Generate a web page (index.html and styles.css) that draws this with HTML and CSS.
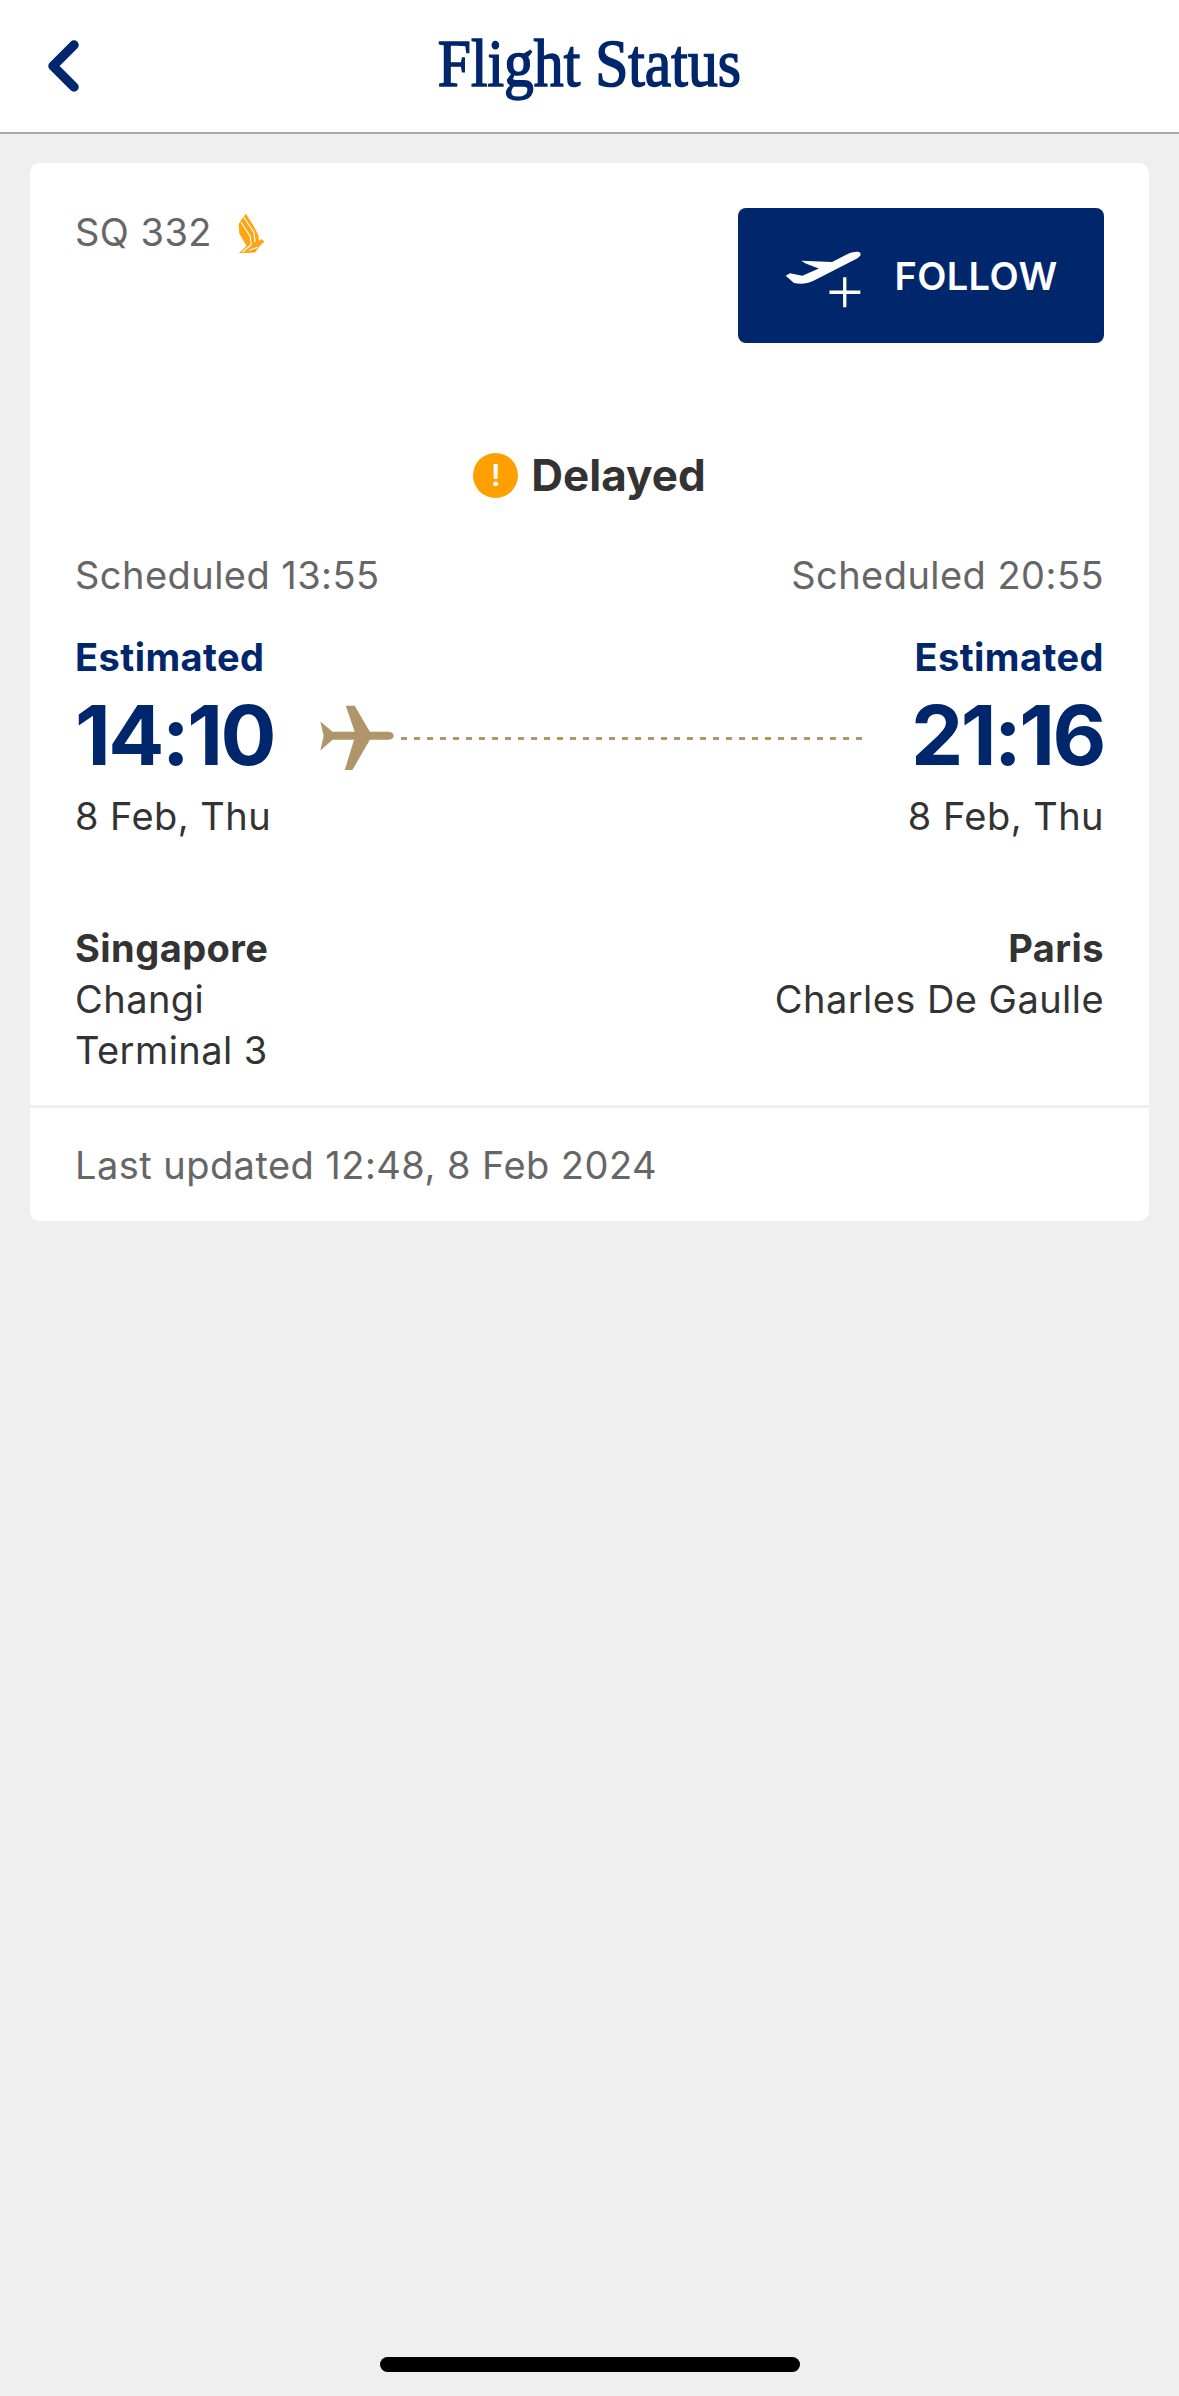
FILE: index.html
```html
<!DOCTYPE html>
<html lang="en">
<head>
<meta charset="utf-8">
<title>Flight Status</title>
<link rel="stylesheet" href="styles.css">
</head>
<body>
<div class="screen">
  <header class="topbar">
    <svg class="back" viewBox="0 0 34 54"><path d="M28 6 L7 27 L28 48"/></svg>
    <h1 class="title"><span>Flight Status</span></h1>
  </header>
  <main class="content">
    <section class="card">
      <div class="card-main">
        <div class="flight-row">
          <div class="flight-no">
            <span>SQ 332</span>
            <svg class="bird" viewBox="26 18 82 124">
              <path fill="#ffa412" d="M50 20 L72 55 L88 85 L90 103 L97 97 L106 104 L92 118 L78 138 L28 140 L52 118 L30 80 L28 52 L36 38 Z"/>
              <path fill="none" stroke="#fff" stroke-width="3.5" d="M43 30 L74 76 L78 106 M35 46 L63 88 L66 114 L40 136 M86 122 L60 131"/>
            </svg>
          </div>
          <button class="follow">
            <svg class="follow-icon" viewBox="185 170 235 180">
              <path fill="#fff" d="M415 182 C410 175 395 178 380 183 L330 209 L237 205 L250 213 L290 228 L240 250 L203 243 L190 250 L215 272 C240 278 260 272 280 262 L405 198 C412 194 418 188 415 182 Z"/>
              <path fill="none" stroke="#fff" stroke-width="10" d="M368 255 V345 M322 300 H415"/>
            </svg>
            <span>FOLLOW</span>
          </button>
        </div>
        <div class="status">
          <span class="status-icon">!</span>
          <span>Delayed</span>
        </div>
        <div class="scheduled">
          <span>Scheduled 13:55</span>
          <span>Scheduled 20:55</span>
        </div>
        <div class="times">
          <div class="time-col">
            <div class="est">Estimated</div>
            <div class="clock">14:10</div>
            <div class="date">8 Feb, Thu</div>
          </div>
          <div class="route">
            <svg class="plane" viewBox="805 260 228 200">
              <path fill="#b0956a" d="M1030 353 C1030 345 1022 341 1012 341 L958 341 L912 262 L885 262 L912 341 L845 341 L808 310 L818 353 L808 398 L845 365 L910 365 L882 457 L905 457 L958 365 L1012 365 C1022 365 1030 361 1030 353 Z"/>
            </svg>
            <div class="dash"></div>
          </div>
          <div class="time-col end">
            <div class="est">Estimated</div>
            <div class="clock">21:16</div>
            <div class="date">8 Feb, Thu</div>
          </div>
        </div>
        <div class="places">
          <div class="place">
            <strong>Singapore</strong>
            <span>Changi</span>
            <span>Terminal 3</span>
          </div>
          <div class="place end">
            <strong>Paris</strong>
            <span>Charles De Gaulle</span>
          </div>
        </div>
      </div>
      <footer class="updated">Last updated 12:48, 8 Feb 2024</footer>
    </section>
  </main>
  <div class="home-bar"></div>
</div>
</body>
</html>
```

FILE: styles.css
```css
* { box-sizing: border-box; }
html, body { margin: 0; padding: 0; }
body {
  background: #efefef;
  font-family: "Inter", "Open Sans", sans-serif;
  letter-spacing: 0.45px;
  color: #333;
}
.screen {
  width: 1179px;
  height: 2396px;
  display: flex;
  flex-direction: column;
  background: #efefef;
}
.topbar {
  height: 134px;
  flex: none;
  background: #fff;
  border-bottom: 2px solid #aaa;
  display: flex;
  align-items: center;
  justify-content: center;
  position: relative;
}
.back {
  position: absolute;
  left: 46px;
  top: 39px;
  width: 34px;
  height: 54px;
}
.back path {
  fill: none;
  stroke: #00266b;
  stroke-width: 9.5;
  stroke-linecap: round;
  stroke-linejoin: round;
}
.title {
  margin: 0 0 7px;
  font-family: "Liberation Serif", serif;
  font-weight: 400;
  font-size: 67px;
  line-height: 80px;
  letter-spacing: 0;
  color: #00266b;
  -webkit-text-stroke: 1.6px #00266b;
}
.title span {
  display: inline-block;
  transform: scaleX(0.89);
}
.content {
  flex: 1;
  padding: 29px 30px 0;
}
.card {
  background: #fff;
  border-radius: 10px;
}
.card-main {
  padding: 45px 45px 29px;
}
.flight-row {
  display: flex;
  justify-content: space-between;
  align-items: flex-start;
}
.flight-no {
  display: flex;
  align-items: center;
  gap: 26px;
  font-size: 38px;
  line-height: 48px;
  color: #666;
}
.bird {
  width: 27px;
  height: 41px;
  flex: none;
  margin-top: 2px;
}
.follow {
  width: 366px;
  height: 135px;
  border: 0;
  border-radius: 8px;
  background: #00266b;
  color: #fff;
  font-family: inherit;
  font-size: 38px;
  font-weight: 600;
  letter-spacing: 0.4px;
  display: flex;
  align-items: center;
  justify-content: center;
  gap: 32px;
  padding: 0;
}
.follow-icon {
  width: 78px;
  height: 60px;
  margin-top: 6px;
}
.status {
  margin-top: 104px;
  display: flex;
  justify-content: center;
  align-items: center;
  gap: 13px;
  font-size: 44px;
  font-weight: 700;
  letter-spacing: 0;
  line-height: 56px;
}
.status-icon {
  width: 45px;
  height: 45px;
  border-radius: 50%;
  background: #ff9f00;
  color: #fff;
  font-size: 30px;
  font-weight: 600;
  line-height: 45px;
  text-align: center;
}
.scheduled {
  margin-top: 48px;
  display: flex;
  justify-content: space-between;
  font-size: 38px;
  line-height: 48px;
  color: #666;
}
.times {
  margin-top: 34px;
  display: flex;
  align-items: flex-start;
  gap: 41px;
}
.time-col {
  flex: none;
}
.time-col.end {
  text-align: right;
}
.est {
  font-size: 38px;
  font-weight: 700;
  line-height: 48px;
  color: #00266b;
}
.clock {
  font-size: 83px;
  font-weight: 700;
  letter-spacing: -2.5px;
  line-height: 108px;
  color: #00266b;
}
.date {
  font-size: 38px;
  line-height: 52px;
  margin-top: 1px;
}
.route {
  flex: 1;
  display: flex;
  align-items: center;
  gap: 6px;
  margin-top: 72px;
}
.plane {
  width: 76px;
  height: 66px;
  flex: none;
  margin-left: 4px;
}
.dash {
  flex: 1;
  height: 3px;
  background: repeating-linear-gradient(90deg, #b0956a 0 6px, transparent 6px 13px);
}
.places {
  margin-top: 81px;
  display: flex;
  justify-content: space-between;
  font-size: 38px;
  line-height: 51px;
}
.place {
  display: flex;
  flex-direction: column;
}
.place.end {
  text-align: right;
}
.place strong {
  font-weight: 700;
}
.updated {
  border-top: 3px solid #efefef;
  padding: 34px 45px 33px;
  font-size: 38px;
  line-height: 46px;
  color: #666;
}
.home-bar {
  position: absolute;
  left: 380px;
  top: 2357px;
  width: 420px;
  height: 15px;
  border-radius: 8px;
  background: #000;
}
```
